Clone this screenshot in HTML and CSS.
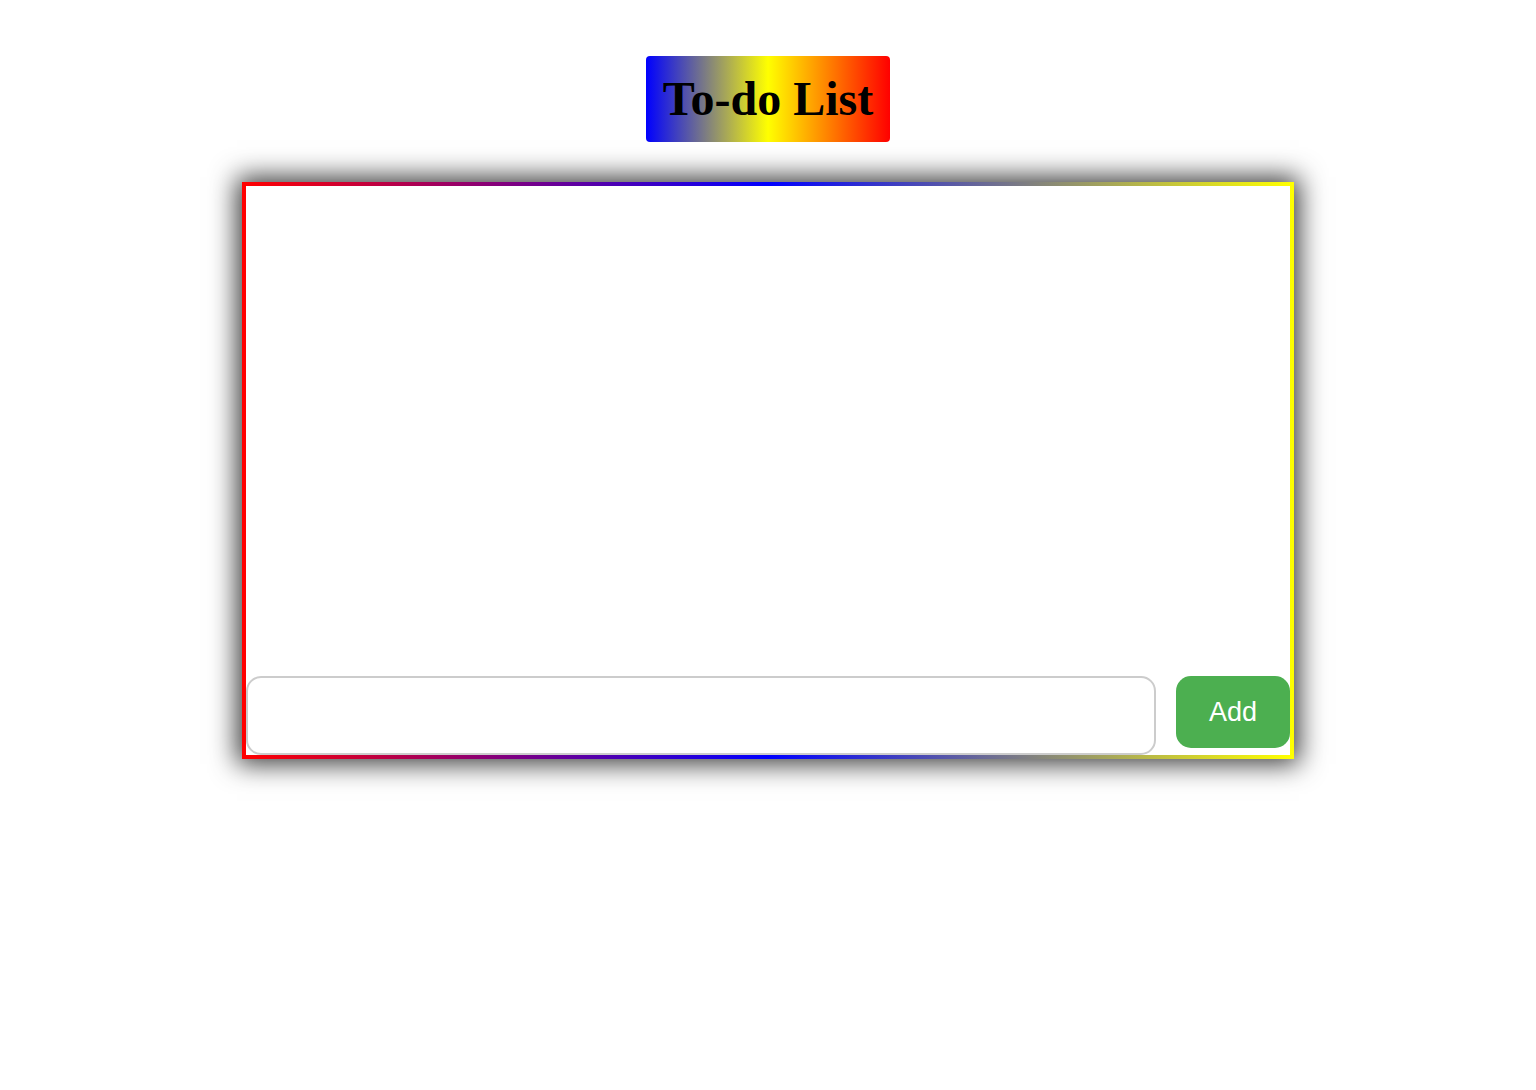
FILE: index.html
```html
<!DOCTYPE html>
<html lang="en">
<head>
<meta charset="utf-8">
<title>To-do List</title>
<link rel="stylesheet" href="styles.css">
</head>
<body>
<div class="page">
  <h1 class="title">To-do List</h1>
  <div class="todo-box">
    <ul class="todo-list"></ul>
    <div class="entry-row">
      <input class="entry-input" type="text">
      <button class="add-btn">Add</button>
    </div>
  </div>
</div>
</body>
</html>
```
FILE: styles.css
```css
html, body {
  margin: 0;
  padding: 0;
  background: #fff;
}
.page {
  display: flex;
  flex-direction: column;
  align-items: center;
  padding-top: 56px;
  min-height: 1000px;
}
.title {
  margin: 0 0 40px 0;
  padding: 15px 17px;
  font-family: "Liberation Serif", "Times New Roman", serif;
  font-weight: bold;
  font-size: 48px;
  line-height: 56px;
  color: #000;
  border-radius: 4px;
  background: linear-gradient(to right, #0000ff, #ffff00, #ff0000);
}
.todo-box {
  width: 1044px;
  height: 569px;
  border: 4px solid;
  border-image: linear-gradient(to right, #ff0000, #0000ff, #ffff00) 1;
  box-shadow: 0 0 25px 5px rgba(0, 0, 0, 0.78);
  display: flex;
  flex-direction: column;
  background: #fff;
}
.todo-list {
  flex: 1;
  margin: 0;
  padding: 0;
  list-style: none;
}
.entry-row {
  display: flex;
  align-items: flex-start;
  gap: 20px;
}
.entry-input {
  box-sizing: border-box;
  flex: 1;
  min-width: 0;
  height: 79px;
  border: 2px solid #cccccc;
  border-radius: 15px;
  padding: 0 15px;
  font-family: "Liberation Sans", Arial, sans-serif;
  font-size: 24px;
  outline: none;
  background: #fff;
}
.add-btn {
  border: none;
  border-radius: 15px;
  background: #4caf50;
  color: #fff;
  font-family: "Liberation Sans", Arial, sans-serif;
  font-size: 27px;
  line-height: 32px;
  padding: 20px 33px;
  cursor: pointer;
}
```
